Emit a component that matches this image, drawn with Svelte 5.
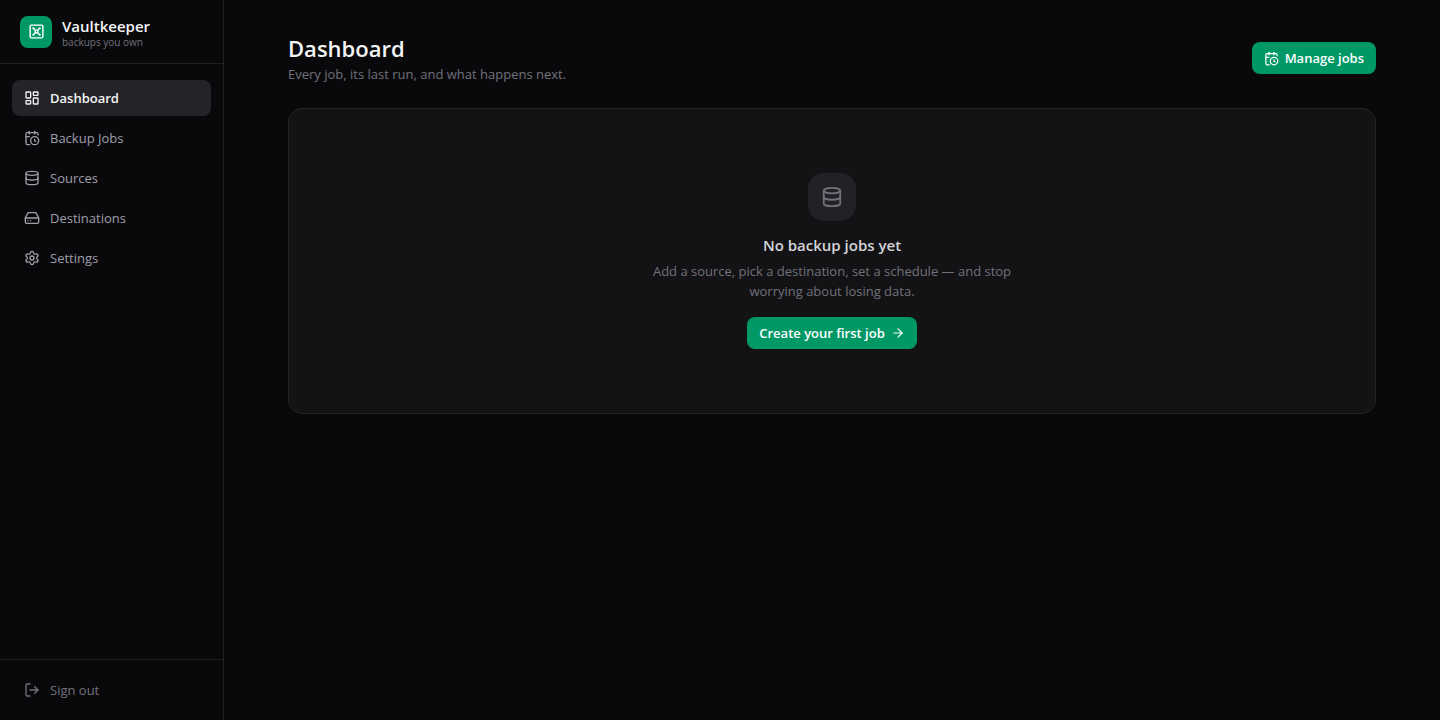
<script lang="ts">
	type IconName =
		| 'vault'
		| 'dashboard'
		| 'calendar'
		| 'database'
		| 'drive'
		| 'settings'
		| 'logout'
		| 'arrow';

	interface NavItem {
		id: string;
		label: string;
		icon: IconName;
	}

	const navItems: NavItem[] = [
		{ id: 'dashboard', label: 'Dashboard', icon: 'dashboard' },
		{ id: 'jobs', label: 'Backup Jobs', icon: 'calendar' },
		{ id: 'sources', label: 'Sources', icon: 'database' },
		{ id: 'destinations', label: 'Destinations', icon: 'drive' },
		{ id: 'settings', label: 'Settings', icon: 'settings' },
	];

	let activeId = $state('dashboard');
</script>

{#snippet icon(name: IconName, size: number)}
	<svg
		class="icon"
		width={size}
		height={size}
		viewBox="0 0 24 24"
		fill="none"
		stroke="currentColor"
		stroke-width="2"
		stroke-linecap="round"
		stroke-linejoin="round"
		aria-hidden="true"
	>
		{#if name === 'vault'}
			<rect width="18" height="18" x="3" y="3" rx="2" />
			<circle cx="7.5" cy="7.5" r=".5" fill="currentColor" />
			<path d="m7.9 7.9 2.7 2.7" />
			<circle cx="16.5" cy="7.5" r=".5" fill="currentColor" />
			<path d="m13.4 10.6 2.7-2.7" />
			<circle cx="7.5" cy="16.5" r=".5" fill="currentColor" />
			<path d="m7.9 16.1 2.7-2.7" />
			<circle cx="16.5" cy="16.5" r=".5" fill="currentColor" />
			<path d="m13.4 13.4 2.7 2.7" />
			<circle cx="12" cy="12" r="2" />
		{:else if name === 'dashboard'}
			<rect width="7" height="9" x="3" y="3" rx="1" />
			<rect width="7" height="5" x="14" y="3" rx="1" />
			<rect width="7" height="9" x="14" y="12" rx="1" />
			<rect width="7" height="5" x="3" y="16" rx="1" />
		{:else if name === 'calendar'}
			<path d="M16 14v2.2l1.6 1" />
			<path d="M16 2v4" />
			<path d="M21 7.5V6a2 2 0 0 0-2-2H5a2 2 0 0 0-2 2v14a2 2 0 0 0 2 2h3.5" />
			<path d="M3 10h5" />
			<path d="M8 2v4" />
			<circle cx="16" cy="16" r="6" />
		{:else if name === 'database'}
			<ellipse cx="12" cy="5" rx="9" ry="3" />
			<path d="M3 5V19A9 3 0 0 0 21 19V5" />
			<path d="M3 12A9 3 0 0 0 21 12" />
		{:else if name === 'drive'}
			<path d="M22 12H2" />
			<path d="M5.45 5.11 2 12v6a2 2 0 0 0 2 2h16a2 2 0 0 0 2-2v-6l-3.45-6.89A2 2 0 0 0 16.76 4H7.24a2 2 0 0 0-1.79 1.11z" />
			<path d="M6 16h.01" />
			<path d="M10 16h.01" />
		{:else if name === 'settings'}
			<path d="M9.671 4.136a2.34 2.34 0 0 1 4.659 0 2.34 2.34 0 0 0 3.319 1.915 2.34 2.34 0 0 1 2.33 4.033 2.34 2.34 0 0 0 0 3.831 2.34 2.34 0 0 1-2.33 4.033 2.34 2.34 0 0 0-3.319 1.915 2.34 2.34 0 0 1-4.659 0 2.34 2.34 0 0 0-3.32-1.915 2.34 2.34 0 0 1-2.33-4.033 2.34 2.34 0 0 0 0-3.831A2.34 2.34 0 0 1 6.35 6.051a2.34 2.34 0 0 0 3.319-1.915" />
			<circle cx="12" cy="12" r="3" />
		{:else if name === 'logout'}
			<path d="m16 17 5-5-5-5" />
			<path d="M21 12H9" />
			<path d="M9 21H5a2 2 0 0 1-2-2V5a2 2 0 0 1 2-2h4" />
		{:else if name === 'arrow'}
			<path d="M5 12h14" />
			<path d="m12 5 7 7-7 7" />
		{/if}
	</svg>
{/snippet}

<div class="shell">
	<aside class="sidebar">
		<div class="brand">
			<span class="brand-mark">{@render icon('vault', 17)}</span>
			<div>
				<div class="brand-name">Vaultkeeper</div>
				<div class="brand-tagline">backups you own</div>
			</div>
		</div>

		<nav class="nav" aria-label="Main navigation">
			{#each navItems as item (item.id)}
				<a
					href="#{item.id}"
					class="nav-item"
					class:active={item.id === activeId}
					aria-current={item.id === activeId ? 'page' : undefined}
					onclick={() => (activeId = item.id)}
				>
					{@render icon(item.icon, 16)}
					{item.label}
				</a>
			{/each}
		</nav>

		<div class="sidebar-footer">
			<button type="button" class="nav-item sign-out">
				{@render icon('logout', 16)}
				Sign out
			</button>
		</div>
	</aside>

	<main class="main">
		<div class="content">
			<header class="page-header">
				<div>
					<h1>Dashboard</h1>
					<p class="subtitle">Every job, its last run, and what happens next.</p>
				</div>
				<a href="#jobs" class="btn" onclick={() => (activeId = 'jobs')}>
					{@render icon('calendar', 15)}
					Manage jobs
				</a>
			</header>

			<section class="empty">
				<span class="empty-icon">{@render icon('database', 22)}</span>
				<h2>No backup jobs yet</h2>
				<p class="empty-text">
					Add a source, pick a destination, set a schedule — and stop worrying about losing data.
				</p>
				<a href="#jobs" class="btn" onclick={() => (activeId = 'jobs')}>
					Create your first job
					{@render icon('arrow', 14)}
				</a>
			</section>
		</div>
	</main>
</div>

<style>
	:global(body) {
		margin: 0;
		background: #09090b;
	}

	.shell {
		display: flex;
		min-height: 100vh;
		color: #f4f4f5;
		font-family: 'Segoe UI', 'Open Sans', 'Noto Sans', sans-serif;
		font-size: 13px;
		line-height: 20px;
	}

	.shell * {
		box-sizing: border-box;
	}

	h1,
	h2,
	p {
		margin: 0;
	}

	.icon {
		display: block;
		flex-shrink: 0;
	}

	/* Sidebar */
	.sidebar {
		display: flex;
		flex-direction: column;
		flex-shrink: 0;
		width: 224px;
		border-right: 1px solid #212124;
	}

	.brand {
		display: flex;
		align-items: center;
		gap: 10px;
		height: 64px;
		padding: 0 20px;
		border-bottom: 1px solid #212124;
	}

	.brand-mark {
		display: grid;
		place-items: center;
		width: 32px;
		height: 32px;
		border-radius: 8px;
		background: #009966;
		color: #ffffff;
	}

	.brand-name {
		font-size: 15px;
		font-weight: 600;
		line-height: 20px;
	}

	.brand-tagline {
		color: #71717b;
		font-size: 10px;
		line-height: 12px;
	}

	.nav {
		display: flex;
		flex: 1;
		flex-direction: column;
		gap: 4px;
		padding: 16px 12px;
	}

	.nav-item {
		display: flex;
		align-items: center;
		gap: 10px;
		width: 100%;
		padding: 8px 12px;
		border: 0;
		border-radius: 8px;
		background: none;
		color: #9f9fa9;
		font: inherit;
		text-align: left;
		text-decoration: none;
		cursor: pointer;
	}

	.nav-item:hover {
		color: #f4f4f5;
	}

	.nav-item.active {
		background: #242428;
		color: #f4f4f5;
		font-weight: 600;
	}

	.sidebar-footer {
		padding: 12px;
		border-top: 1px solid #212124;
	}

	.nav-item.sign-out {
		color: #71717b;
	}

	/* Page */
	.main {
		flex: 1;
		min-width: 0;
	}

	.content {
		max-width: 1152px;
		margin: 0 auto;
		padding: 32px;
	}

	.page-header {
		display: flex;
		align-items: center;
		justify-content: space-between;
		gap: 16px;
		margin-bottom: 24px;
	}

	h1 {
		font-size: 22px;
		font-weight: 600;
		line-height: 32px;
	}

	.subtitle,
	.empty-text {
		color: #71717b;
	}

	.btn {
		display: inline-flex;
		align-items: center;
		gap: 6px;
		height: 32px;
		padding: 0 12px;
		border-radius: 8px;
		background: #009966;
		color: #ffffff;
		font-weight: 600;
		text-decoration: none;
		white-space: nowrap;
	}

	.btn:hover {
		background: #00a870;
	}

	/* Empty state */
	.empty {
		display: flex;
		flex-direction: column;
		align-items: center;
		padding: 64px 24px;
		border: 1px solid #242427;
		border-radius: 14px;
		background: #131315;
		text-align: center;
	}

	.empty-icon {
		display: grid;
		place-items: center;
		width: 48px;
		height: 48px;
		margin-bottom: 12px;
		border-radius: 16px;
		background: #222226;
		color: #71717b;
	}

	h2 {
		color: #d4d4d8;
		font-size: 15px;
		font-weight: 600;
		line-height: 24px;
	}

	.empty-text {
		max-width: 384px;
		margin: 4px 0 16px;
	}
</style>
